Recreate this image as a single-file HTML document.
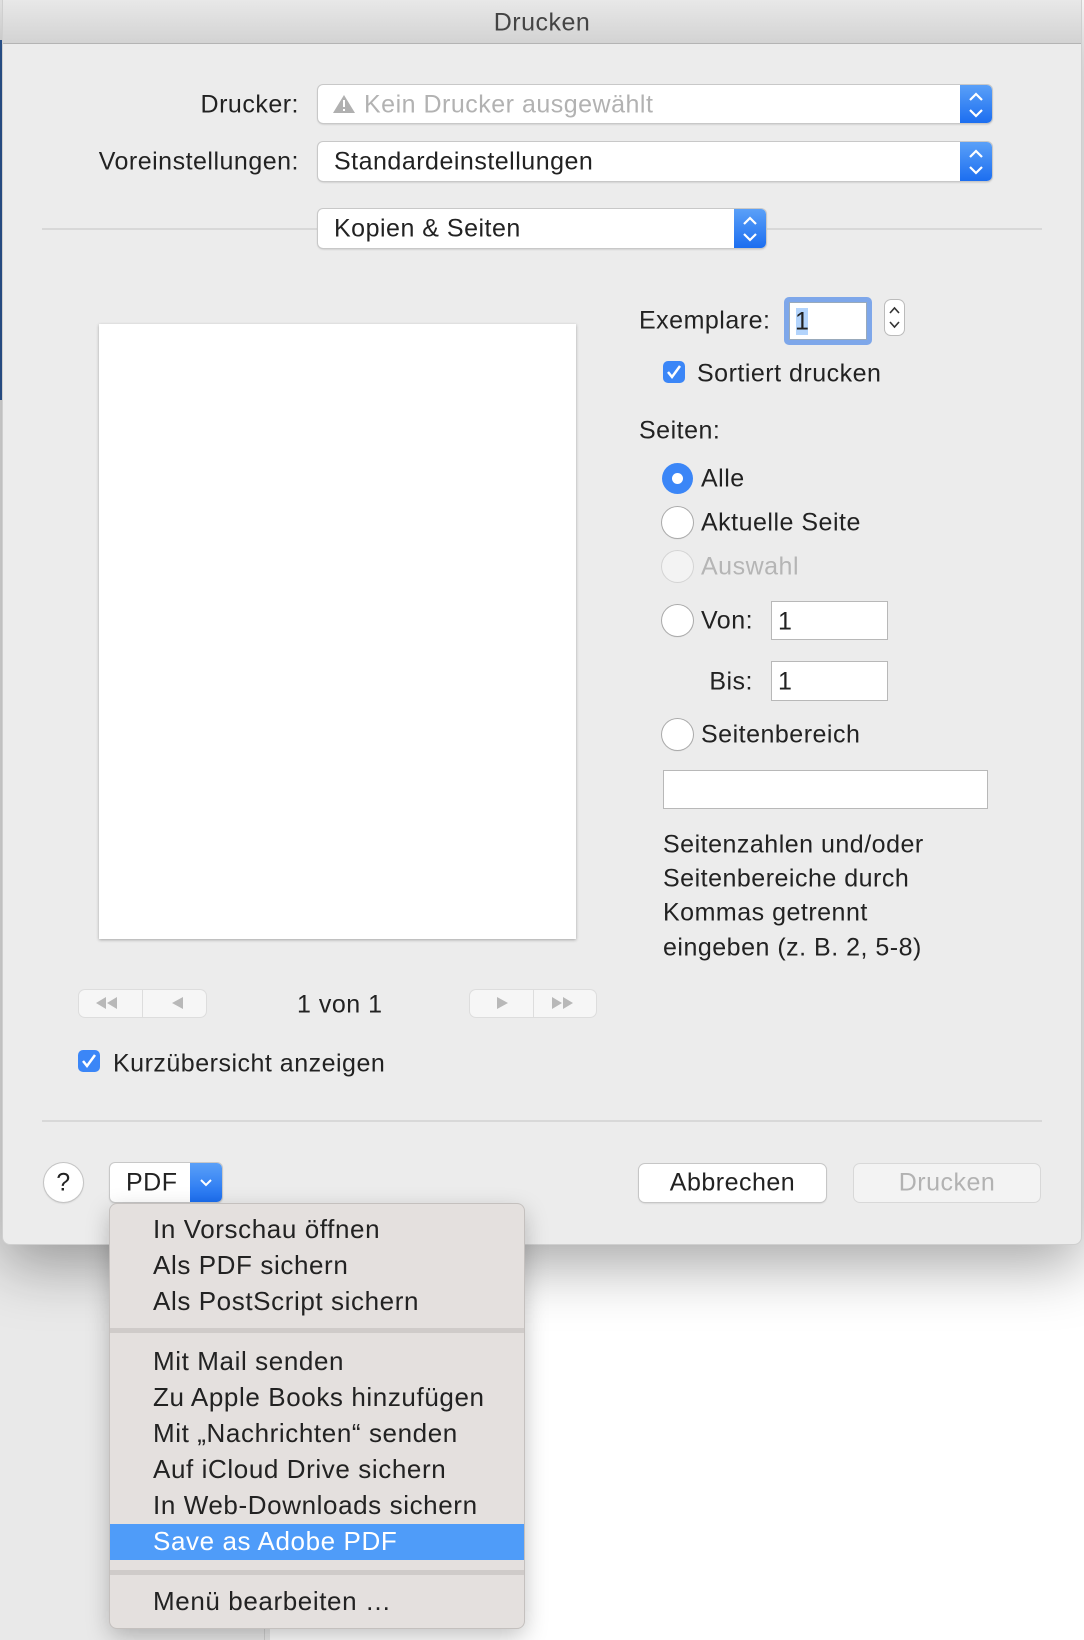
<!DOCTYPE html>
<html><head><meta charset="utf-8"><style>
*{margin:0;padding:0;box-sizing:border-box}
body{width:1084px;height:1640px;position:relative;overflow:hidden;background:#fff;font-family:"Liberation Sans",sans-serif;color:#222;font-size:25px;letter-spacing:0.5px}
.a{position:absolute}
.t{position:absolute;white-space:nowrap;line-height:1;transform:translateY(-50%)}
.pop{position:absolute;background:#fff;border-radius:5px;box-shadow:0 0 0 1px #c8c8c8,0 1px 2px rgba(0,0,0,.25)}
.pop .b{position:absolute;right:0;top:0;bottom:0;width:32px;background:linear-gradient(#5aa0f8,#1c6ef0);border-radius:0 5px 5px 0}
.radio{position:absolute;width:31px;height:31px;border-radius:50%;background:#fff;box-shadow:0 0 0 1px #aaa,0 1px 1px rgba(0,0,0,.2)}
.field{position:absolute;background:#fff;border:1px solid #b8b8b8}
.chk{position:absolute;width:22px;height:22px;border-radius:5px;background:#3b86f7}
.btn{position:absolute;background:#fff;border-radius:6px;box-shadow:0 0 0 1px #c6c6c6,0 1px 2px rgba(0,0,0,.2)}
.mi{position:absolute;left:43px;white-space:nowrap;line-height:1;transform:translateY(-50%);font-size:26px;letter-spacing:0.6px;color:#222}
</style></head><body>
<div class="a" style="left:0;top:0;width:270px;height:1640px;background:#e9e9e9"></div>
<div class="a" style="left:264px;top:1245px;width:1px;height:395px;background:#d0d0d0"></div>
<div class="a" style="left:0;top:40px;width:3px;height:360px;background:#2d5a9a"></div>
<!-- window -->
<div class="a" style="left:2px;top:0;width:1080px;height:1245px;background:#ececec;border-radius:0 0 8px 8px;box-shadow:0 20px 60px rgba(0,0,0,.35);border:1px solid #cfcfcf"></div>
<div class="a" style="left:3px;top:0;width:1078px;height:44px;background:linear-gradient(#e8e8e8,#d3d3d3);border-bottom:1px solid #b4b4b4"></div>
<div class="t" style="left:0;width:1084px;text-align:center;top:23px;color:#444;font-size:25px">Drucken</div>

<div class="t" style="right:785px;top:105px">Drucker:</div>
<div class="pop" style="left:318px;top:85px;width:674px;height:38px"><div class="b"></div></div>
<svg class="a" style="left:332px;top:94px" width="24" height="20"><path d="M12 1L23 19H1Z" fill="#b0b0b0"/><rect x="11" y="6" width="2" height="7" fill="#fff"/><rect x="11" y="15" width="2" height="2" fill="#fff"/></svg>
<div class="t" style="left:364px;top:105px;color:#b2b2b2">Kein Drucker ausgewählt</div>

<div class="t" style="right:785px;top:162px">Voreinstellungen:</div>
<div class="pop" style="left:318px;top:142px;width:674px;height:39px"><div class="b"></div></div>
<div class="t" style="left:334px;top:162px">Standardeinstellungen</div>

<div class="a" style="left:42px;top:228px;width:1000px;height:2px;background:#d8d8d8"></div>
<div class="pop" style="left:318px;top:209px;width:448px;height:39px"><div class="b"></div></div>
<div class="t" style="left:334px;top:229px">Kopien &amp; Seiten</div>

<svg class="a" style="left:0;top:0" width="1084" height="260" fill="none" stroke="#fff" stroke-width="2.2">
<path d="M970 100l6-6 6 6M970 110l6 6 6-6"/><path d="M970 157l6-6 6 6M970 167l6 6 6-6"/><path d="M744 224l6-6 6 6M744 234l6 6 6-6"/></svg>

<!-- preview -->
<div class="a" style="left:99px;top:324px;width:477px;height:615px;background:#fff;box-shadow:0 1px 3px rgba(0,0,0,.3)"></div>

<div class="t" style="left:639px;top:321px">Exemplare:</div>
<div class="a" style="left:784px;top:297px;width:88px;height:48px;border-radius:5px;background:#7ea7ea"></div>
<div class="a" style="left:789px;top:302px;width:78px;height:38px;background:#fff;border:1px solid #9ab"></div>
<div class="a" style="left:796px;top:308px;width:12px;height:27px;background:#b3d4fc"></div>
<div class="t" style="left:795px;top:322px">1</div>
<div class="a" style="left:885px;top:300px;width:19px;height:35px;background:#fff;border-radius:6px;box-shadow:0 0 0 1px #bbb"></div>
<svg class="a" style="left:885px;top:300px" width="19" height="35" fill="none" stroke="#333" stroke-width="1.6"><path d="M5 13l4.5-5 4.5 5M5 22l4.5 5 4.5-5"/></svg>

<div class="chk" style="left:663px;top:361px"></div>
<svg class="a" style="left:663px;top:361px" width="22" height="22" fill="none" stroke="#fff" stroke-width="2.5"><path d="M5 11l4 5 8-11"/></svg>
<div class="t" style="left:697px;top:374px">Sortiert drucken</div>

<div class="t" style="left:639px;top:431px">Seiten:</div>
<div class="radio" style="left:662px;top:463px;background:#3b86f7;box-shadow:none"></div>
<div class="a" style="left:672px;top:473px;width:11px;height:11px;border-radius:50%;background:#fff"></div>
<div class="t" style="left:701px;top:479px">Alle</div>
<div class="radio" style="left:662px;top:507px"></div>
<div class="t" style="left:701px;top:523px">Aktuelle Seite</div>
<div class="radio" style="left:662px;top:551px;box-shadow:0 0 0 1px #d4d4d4;background:#f3f3f3"></div>
<div class="t" style="left:701px;top:567px;color:#b5b5b5">Auswahl</div>
<div class="radio" style="left:662px;top:605px"></div>
<div class="t" style="left:701px;top:621px">Von:</div>
<div class="field" style="left:771px;top:601px;width:117px;height:39px"></div>
<div class="t" style="left:778px;top:622px">1</div>
<div class="t" style="right:331px;top:682px">Bis:</div>
<div class="field" style="left:771px;top:661px;width:117px;height:40px"></div>
<div class="t" style="left:778px;top:682px">1</div>
<div class="radio" style="left:662px;top:719px"></div>
<div class="t" style="left:701px;top:735px">Seitenbereich</div>
<div class="field" style="left:663px;top:770px;width:325px;height:39px"></div>
<div class="t" style="left:663px;top:845px">Seitenzahlen und/oder</div>
<div class="t" style="left:663px;top:879px">Seitenbereiche durch</div>
<div class="t" style="left:663px;top:913px">Kommas getrennt</div>
<div class="t" style="left:663px;top:948px">eingeben (z. B. 2, 5-8)</div>

<!-- nav -->
<div class="btn" style="left:79px;top:990px;width:127px;height:27px;background:#f6f6f6;box-shadow:0 0 0 1px #ddd"></div>
<div class="a" style="left:142px;top:990px;width:1px;height:27px;background:#ddd"></div>
<div class="btn" style="left:470px;top:990px;width:126px;height:27px;background:#f6f6f6;box-shadow:0 0 0 1px #ddd"></div>
<div class="a" style="left:533px;top:990px;width:1px;height:27px;background:#ddd"></div>
<svg class="a" style="left:0;top:990px" width="620" height="27" fill="#b8b8b8"><path d="M96 13l10-6v12zM107 13l10-6v12zM172 13l11-6v12zM508 13l-11-6v12zM562 13l-10-6v12zM573 13l-10-6v12z"/></svg>
<div class="t" style="left:297px;top:1005px">1 von 1</div>

<div class="chk" style="left:78px;top:1050px"></div>
<svg class="a" style="left:78px;top:1050px" width="22" height="22" fill="none" stroke="#fff" stroke-width="2.5"><path d="M5 11l4 5 8-11"/></svg>
<div class="t" style="left:113px;top:1064px">Kurzübersicht anzeigen</div>

<div class="a" style="left:42px;top:1120px;width:1000px;height:2px;background:#d8d8d8"></div>

<div class="a" style="left:44px;top:1163px;width:39px;height:39px;border-radius:50%;background:#fff;box-shadow:0 0 0 1px #c4c4c4,0 1px 2px rgba(0,0,0,.2)"></div>
<div class="t" style="left:44px;width:39px;text-align:center;top:1183px">?</div>
<div class="pop" style="left:110px;top:1163px;width:112px;height:39px"><div class="b"></div></div>
<div class="t" style="left:126px;top:1183px">PDF</div>
<svg class="a" style="left:190px;top:1163px" width="32" height="39" fill="none" stroke="#fff" stroke-width="2"><path d="M11 17l5 5 5-5"/></svg>
<div class="btn" style="left:639px;top:1164px;width:187px;height:38px"></div>
<div class="t" style="left:639px;width:187px;text-align:center;top:1183px">Abbrechen</div>
<div class="btn" style="left:854px;top:1164px;width:186px;height:38px;background:#f3f3f3;box-shadow:0 0 0 1px #d8d8d8"></div>
<div class="t" style="left:854px;width:186px;text-align:center;top:1183px;color:#b2b2b2">Drucken</div>

<!-- menu -->
<div class="a" style="left:110px;top:1204px;width:414px;height:424px;background:#e4e0de;border-radius:7px;box-shadow:0 0 0 1px #c4c0be,0 8px 24px rgba(0,0,0,.25);overflow:hidden">
<div class="a" style="left:0;top:124px;width:414px;height:5px;background:#cfcbc9"></div>
<div class="a" style="left:0;top:320px;width:414px;height:36px;background:#4f9cf9"></div>
<div class="a" style="left:0;top:366px;width:414px;height:5px;background:#cfcbc9"></div>
<div class="mi" style="top:25px">In Vorschau öffnen</div>
<div class="mi" style="top:61px">Als PDF sichern</div>
<div class="mi" style="top:97px">Als PostScript sichern</div>
<div class="mi" style="top:157px">Mit Mail senden</div>
<div class="mi" style="top:193px">Zu Apple Books hinzufügen</div>
<div class="mi" style="top:229px">Mit „Nachrichten“ senden</div>
<div class="mi" style="top:265px">Auf iCloud Drive sichern</div>
<div class="mi" style="top:301px">In Web-Downloads sichern</div>
<div class="mi" style="top:337px;color:#fff">Save as Adobe PDF</div>
<div class="mi" style="top:397px">Menü bearbeiten …</div>
</div>
</body></html>
